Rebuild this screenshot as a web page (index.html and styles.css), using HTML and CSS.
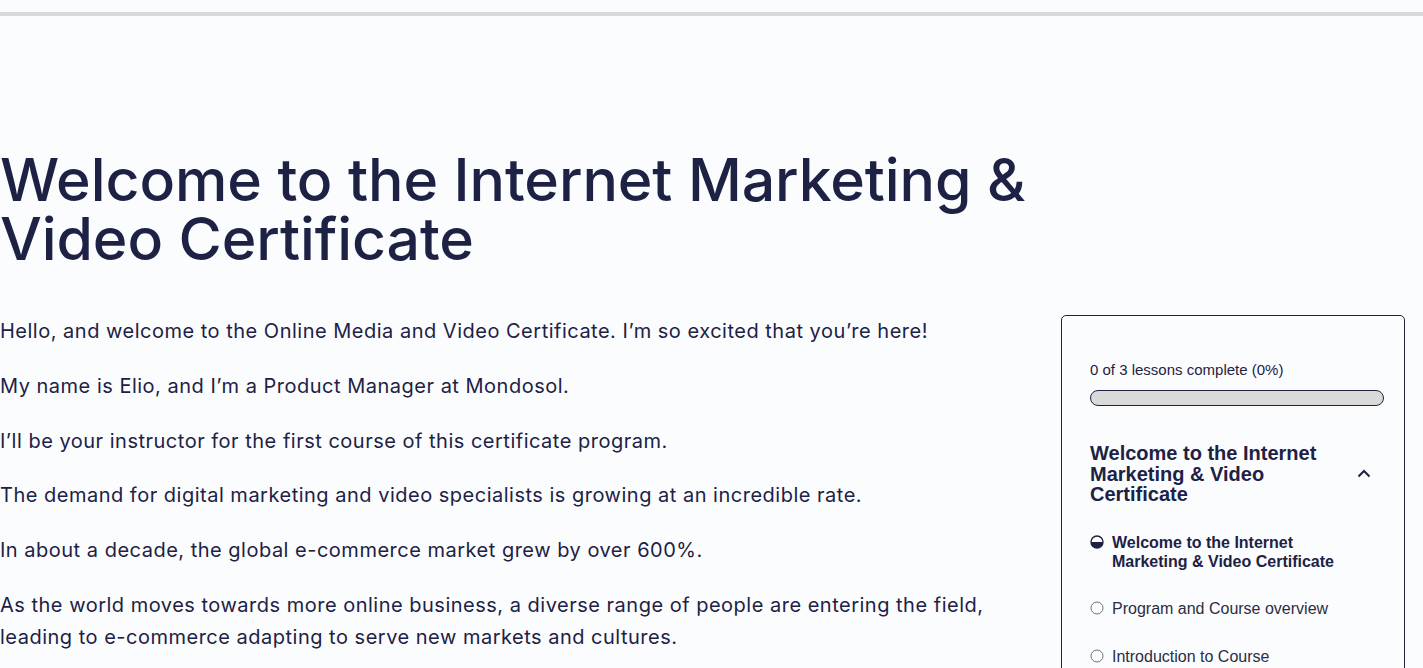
FILE: index.html
```html
<!DOCTYPE html>
<html lang="en">
<head>
<meta charset="utf-8">
<title>Welcome to the Internet Marketing &amp; Video Certificate</title>
<link rel="stylesheet" href="styles.css">
</head>
<body>
<div class="topbar"></div>
<main class="page">
  <h1 class="title">Welcome to the Internet Marketing &amp; Video Certificate</h1>
  <div class="layout">
    <article class="content">
      <p>Hello, and welcome to the Online Media and Video Certificate. I’m so excited that you’re here!</p>
      <p>My name is Elio, and I’m a Product Manager at Mondosol.</p>
      <p>I’ll be your instructor for the first course of this certificate program.</p>
      <p>The demand for digital marketing and video specialists is growing at an incredible rate.</p>
      <p>In about a decade, the global e-commerce market grew by over 600%.</p>
      <p>As the world moves towards more online business, a diverse range of people are entering the field, leading to e-commerce adapting to serve new markets and cultures.</p>
    </article>
    <aside class="sidebar">
      <div class="progress-label">0 of 3 lessons complete (0%)</div>
      <div class="progress-bar"><div class="progress-fill" style="width:0%"></div></div>
      <div class="section-head">
        <h2 class="section-title">Welcome to the Internet Marketing &amp; Video Certificate</h2>
        <svg class="chevron" width="14" height="9" viewBox="0 0 14 9" aria-hidden="true"><path d="M1.5 7.5 L7 2 L12.5 7.5" fill="none" stroke="#1d2245" stroke-width="2"/></svg>
      </div>
      <ul class="lessons">
        <li class="lesson current">
          <svg class="lesson-icon" width="14" height="14" viewBox="0 0 14 14" aria-hidden="true"><circle cx="7" cy="7" r="6" fill="#fff" stroke="#1d2245" stroke-width="1.4"/><path d="M1 7 A6 6 0 0 0 13 7 Z" fill="#1d2245"/></svg>
          <span>Welcome to the Internet Marketing &amp; Video Certificate</span>
        </li>
        <li class="lesson">
          <svg class="lesson-icon" width="14" height="14" viewBox="0 0 14 14" aria-hidden="true"><circle cx="7" cy="7" r="6" fill="#fff" stroke="#6b6e7e" stroke-width="1"/></svg>
          <span>Program and Course overview</span>
        </li>
        <li class="lesson">
          <svg class="lesson-icon" width="14" height="14" viewBox="0 0 14 14" aria-hidden="true"><circle cx="7" cy="7" r="6" fill="#fff" stroke="#6b6e7e" stroke-width="1"/></svg>
          <span>Introduction to Course</span>
        </li>
      </ul>
    </aside>
  </div>
</main>
</body>
</html>
```
FILE: styles.css
```css
html, body {
  margin: 0;
  padding: 0;
  background: #fbfcfe;
  overflow: hidden;
}
body {
  font-family: Inter, "Open Sans", sans-serif;
  color: #1d2245;
}
.topbar {
  margin-top: 12px;
  height: 4px;
  background: #d9d9d9;
}
.page {
  padding: 0;
}
.title {
  margin: 134px 0 0 0;
  width: 1060px;
  font-family: Inter, "Open Sans", sans-serif;
  font-size: 59px;
  line-height: 59px;
  font-weight: 500;
  letter-spacing: -0.1px;
  color: #1d2245;
}
.layout {
  display: flex;
  align-items: flex-start;
  gap: 20px;
  margin-top: 47px;
}
.content {
  flex: 0 0 1041px;
}
.content p {
  margin: 0 0 22.8px 0;
  font-size: 20px;
  line-height: 32px;
  letter-spacing: 0.5px;
  color: #1d2245;
}
.sidebar {
  flex: 0 0 344px;
  box-sizing: border-box;
  border: 1px solid #1d2245;
  border-radius: 5px;
  padding: 45px 34px 0 28px;
  font-family: "Liberation Sans", Arial, sans-serif;
  background: #fbfcfe;
}
.progress-label {
  font-size: 15px;
  line-height: 17px;
  color: #1d2245;
}
.progress-bar {
  margin-top: 12px;
  margin-right: -14px;
  height: 16px;
  box-sizing: border-box;
  border: 1px solid #1d2245;
  border-radius: 8px;
  background: #d9d9d9;
  overflow: hidden;
}
.progress-fill {
  height: 100%;
  background: #1d2245;
}
.section-head {
  display: flex;
  align-items: center;
  justify-content: space-between;
  gap: 12px;
  margin-top: 37px;
}
.section-title {
  margin: 0;
  font-size: 20px;
  line-height: 20.5px;
  font-weight: 700;
  color: #1d2245;
}
.chevron {
  flex: none;
  margin-right: -1px;
}
.lessons {
  list-style: none;
  margin: 14px 0 0 0;
  padding: 0;
}
.lesson {
  display: flex;
  align-items: flex-start;
  gap: 8px;
  padding: 14px 0;
  font-size: 16px;
  line-height: 19px;
  color: #2a2d45;
}
.lesson:last-child {
  padding-top: 15px;
}
.lesson.current {
  font-weight: 700;
  color: #1d2245;
}
.lesson-icon {
  flex: none;
  margin-top: 2px;
}
```
